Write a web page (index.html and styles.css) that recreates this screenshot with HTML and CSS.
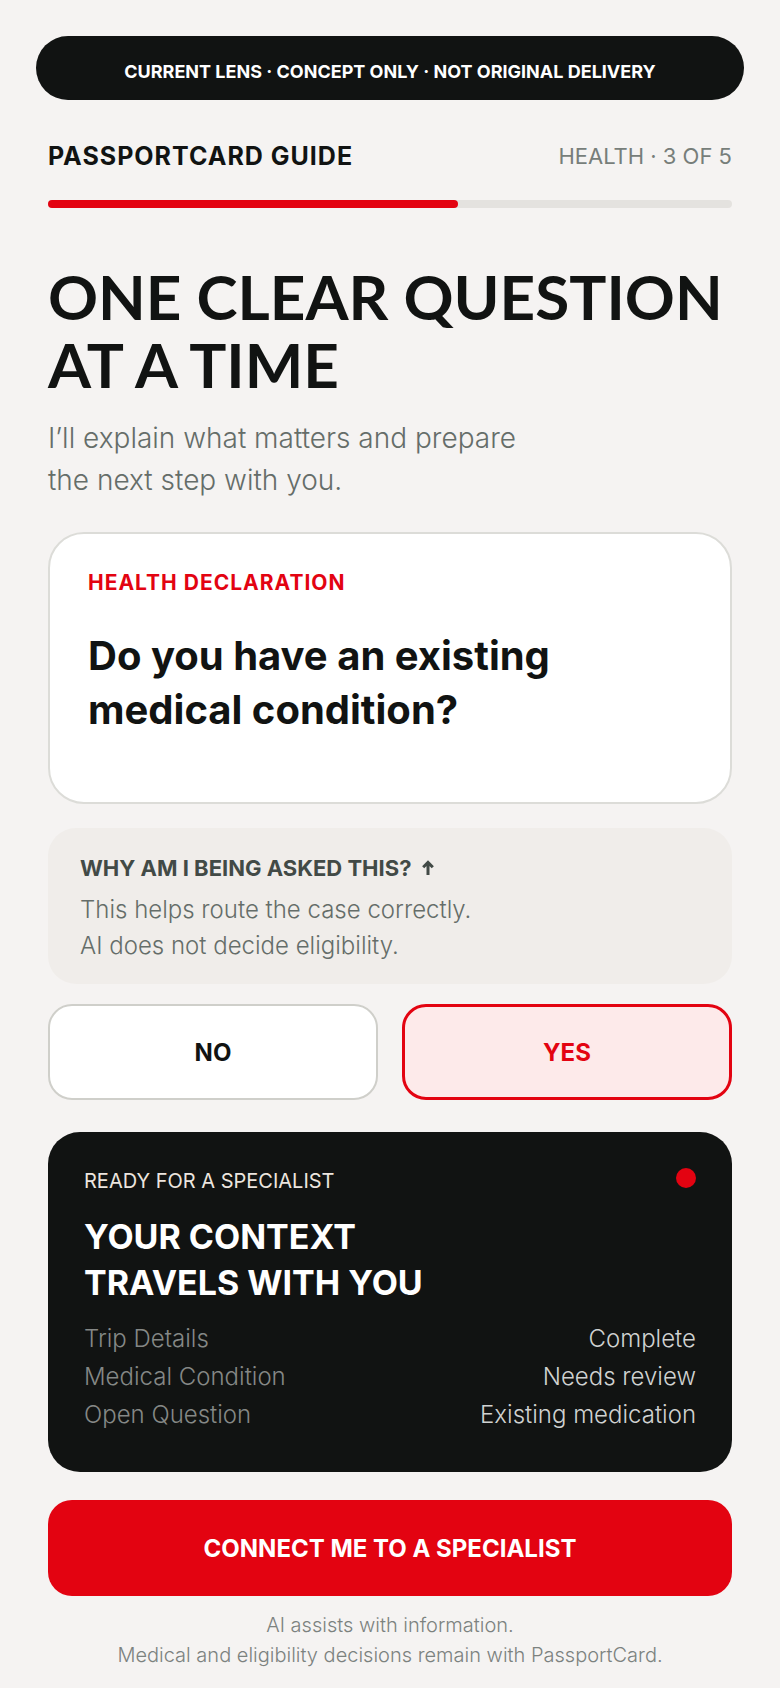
FILE: index.html
```html
<!DOCTYPE html>
<html lang="en">
<head>
    <meta charset="UTF-8">
    <meta name="viewport" content="width=device-width, initial-scale=1.0">
    <title>PassportCard Guide</title>
    <link rel="stylesheet" href="styles.css">
</head>
<body>
    <p class="banner">CURRENT LENS · CONCEPT ONLY · NOT ORIGINAL DELIVERY</p>

    <main class="content">
        <header class="top">
            <span class="brand">PASSPORTCARD GUIDE</span>
            <span class="step">HEALTH · 3 OF 5</span>
        </header>
        <div class="progress" role="progressbar" aria-valuemin="0" aria-valuemax="5" aria-valuenow="3">
            <div class="progress-fill" style="width: 60%"></div>
        </div>

        <h1>ONE CLEAR QUESTION<br>AT A TIME</h1>
        <p class="intro">I’ll explain what matters and prepare<br>the next step with you.</p>

        <section class="question-card">
            <p class="label">HEALTH DECLARATION</p>
            <h2 id="question">Do you have an existing<br>medical condition?</h2>
        </section>

        <section class="why">
            <button type="button" class="why-toggle" aria-expanded="true" aria-controls="why-text">
                WHY AM I BEING ASKED THIS?
                <svg class="arrow" viewBox="0 0 14 16" aria-hidden="true"><path d="M7 15V2.5M2.2 7.2 7 2.4l4.8 4.8"/></svg>
            </button>
            <p id="why-text">This helps route the case correctly.<br>AI does not decide eligibility.</p>
        </section>

        <div class="answers" role="group" aria-labelledby="question">
            <button type="button" class="btn">NO</button>
            <button type="button" class="btn selected" aria-pressed="true">YES</button>
        </div>

        <section class="summary">
            <div class="summary-top">
                <p>READY FOR A SPECIALIST</p>
                <span class="dot"></span>
            </div>
            <h2>YOUR CONTEXT<br>TRAVELS WITH YOU</h2>
            <dl>
                <div class="row"><dt>Trip Details</dt><dd>Complete</dd></div>
                <div class="row"><dt>Medical Condition</dt><dd>Needs review</dd></div>
                <div class="row"><dt>Open Question</dt><dd>Existing medication</dd></div>
            </dl>
        </section>

        <button type="button" class="btn primary">CONNECT ME TO A SPECIALIST</button>

        <footer>AI assists with information.<br>Medical and eligibility decisions remain with PassportCard.</footer>
    </main>
</body>
</html>
```
FILE: styles.css
```css
* {
    margin: 0;
    padding: 0;
    box-sizing: border-box;
}
body {
    padding: 36px 36px 16px;
    background-color: #f5f3f2;
    color: #111312;
    font-family: Inter, "Liberation Sans", sans-serif;
    font-size: 24px;
}
button {
    font-family: inherit;
    cursor: pointer;
}
.banner {
    padding: 22px 24px 14px;
    border-radius: 32px;
    background-color: #111312;
    color: #fff;
    font-size: 18px;
    font-weight: 700;
    line-height: 28px;
    text-align: center;
}
.content {
    padding: 40px 12px 0;
}
.top {
    display: flex;
    justify-content: space-between;
    align-items: center;
    margin-bottom: 28px;
    line-height: 32px;
}
.brand {
    font-size: 25px;
    font-weight: 700;
    letter-spacing: 1px;
}
.step {
    color: #777e7a;
    font-size: 22px;
}
.progress {
    height: 8px;
    border-radius: 4px;
    background-color: #e4e2df;
}
.progress-fill {
    height: 100%;
    border-radius: 4px;
    background-color: #e30311;
}
h1 {
    margin-top: 54px;
    font-family: Lato, sans-serif;
    font-size: 62px;
    font-weight: 700;
    line-height: 68px;
}
.intro {
    margin: 19px 0 31px;
    color: #656d69;
    font-size: 28px;
    font-weight: 300;
    line-height: 42px;
}
.question-card {
    padding: 34px 38px 65px;
    border: 2px solid #dcdcd8;
    border-radius: 36px;
    background-color: #fff;
}
.label {
    margin-bottom: 31px;
    color: #e30311;
    font-size: 21px;
    font-weight: 700;
    line-height: 30px;
    letter-spacing: 1px;
}
.question-card h2 {
    font-size: 40px;
    font-weight: 700;
    line-height: 54px;
}
.why {
    margin: 24px 0 20px;
    padding: 24px 32px 20px;
    border-radius: 28px;
    background-color: #f0edea;
}
.why-toggle {
    display: flex;
    align-items: center;
    gap: 10px;
    margin-bottom: 8px;
    border: none;
    background: none;
    color: #424a46;
    font-size: 22px;
    font-weight: 700;
    line-height: 32px;
}
.arrow {
    width: 14px;
    height: 16px;
    fill: none;
    stroke: currentColor;
    stroke-width: 3;
}
.why p {
    color: #656d69;
    font-weight: 300;
    line-height: 36px;
}
.answers {
    display: grid;
    grid-template-columns: 1fr 1fr;
    gap: 24px;
}
.btn {
    height: 96px;
    border: 2px solid #cfcfca;
    border-radius: 24px;
    background-color: #fff;
    color: #111312;
    font-size: 24px;
    font-weight: 700;
}
.btn.selected {
    border: 3px solid #e30311;
    background-color: #fdeaea;
    color: #e30311;
}
.btn.primary {
    width: 100%;
    border: none;
    background-color: #e30311;
    color: #fff;
}
.summary {
    margin: 32px 0 28px;
    padding: 36px 36px 38px;
    border-radius: 32px;
    background-color: #111312;
    color: #fff;
}
.summary-top {
    display: flex;
    justify-content: space-between;
    margin-bottom: 20px;
    color: #ece5df;
    font-size: 20px;
    line-height: 26px;
}
.dot {
    width: 20px;
    height: 20px;
    border-radius: 50%;
    background-color: #e30311;
}
.summary h2 {
    margin-bottom: 14px;
    font-size: 34px;
    font-weight: 700;
    line-height: 46px;
}
.row {
    display: flex;
    justify-content: space-between;
    font-weight: 300;
    line-height: 38px;
}
.row dt {
    color: #858886;
}
.row dd {
    color: #d0d2d1;
}
footer {
    margin-top: 14px;
    color: #7c827f;
    font-size: 20px;
    font-weight: 300;
    line-height: 30px;
    text-align: center;
}
```
